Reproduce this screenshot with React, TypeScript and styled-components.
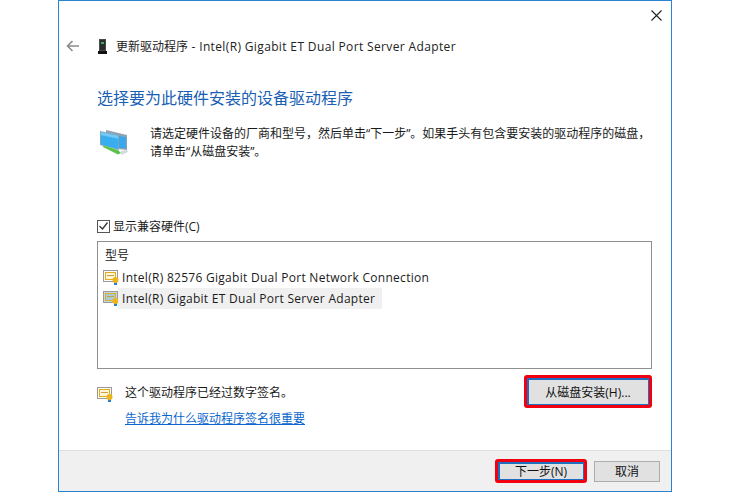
import styled, { createGlobalStyle } from "styled-components";

const GlobalStyle = createGlobalStyle`
  html, body {
    margin: 0;
    padding: 0;
    background: #ffffff;
  }
  body {
    font-family: "Open Sans", "Noto Sans CJK SC", sans-serif;
    font-size: 12px;
    color: #1a1a1a;
  }
`;

function BackArrow() {
  return (
    <svg width="14" height="12" viewBox="0 0 14 12" fill="none" stroke="#8c8c8c" strokeWidth="1.6">
      <path d="M13 6H1.500M6.500 1L1.500 6l5 5" />
    </svg>
  );
}

function DeviceIcon() {
  return (
    <svg width="9" height="15" viewBox="0 0 9 15">
      <rect x="1" y="0" width="7" height="12" fill="#4a4a4a" />
      <rect x="2" y="1" width="5" height="10" fill="#2b2b2b" />
      <rect x="3" y="3" width="3" height="2" fill="#3fae5a" />
      <rect x="0" y="12" width="9" height="3" fill="#111" />
    </svg>
  );
}

function NetworkIcon() {
  return (
    <svg width="28" height="26" viewBox="0 0 28 26">
      <path d="M6 0l21 5v15l-9-1V6L6 3z" fill="#8ea4b4" />
      <path d="M19 6l7 1.200v11.300l-7-.8z" fill="#38a8ea" />
      <path d="M0 1l19 4v15L0 15z" fill="#8ea4b4" />
      <path d="M.8 2l17.400 3.700v13.500L.8 14.600z" fill="#38aef0" />
      <path d="M.8 2l17.400 3.700v3L.8 5z" fill="#74caf4" />
      <path d="M2 16.500l3-.5 13 4 3 3-3 1.500z" fill="#5cc24d" />
      <path d="M21 21l6-1 1 2-7 3z" fill="#d2dade" />
    </svg>
  );
}

function CertIcon({ selected = false }: { selected?: boolean }) {
  return (
    <svg width="16" height="15" viewBox="0 0 16 15">
      <rect x="0.500" y="0.500" width="14" height="11" fill={selected ? "#c4d8e0" : "#fffdf4"} stroke="#9a9a9a" />
      <rect x="2.500" y="2.500" width="10" height="7" fill={selected ? "#a8cbd8" : "#fff6d8"} stroke="#e2ac20" />
      <rect x="4" y="5" width="7" height="1" fill="#c9a040" />
      <rect x="11" y="12" width="3" height="3" fill="#2f7fd0" />
      <circle cx="12.500" cy="10" r="3" fill="#efb41c" />
    </svg>
  );
}

function CloseIcon() {
  return (
    <svg width="11" height="11" viewBox="0 0 11 11" stroke="#222" strokeWidth="1.100">
      <path d="M0.500 0.500l10 10M10.500 0.500l-10 10" />
    </svg>
  );
}

function CheckMark() {
  return (
    <svg width="9" height="8" viewBox="0 0 9 8" fill="none" stroke="#333" strokeWidth="1.300">
      <path d="M0.500 4l3 3 5-6.500" />
    </svg>
  );
}

export default function App() {
  return (
    <>
      <GlobalStyle />
      <Window>
        <TitleBar>
          <CloseButton>
            <CloseIcon />
          </CloseButton>
        </TitleBar>
        <Header>
          <BackButton>
            <BackArrow />
          </BackButton>
          <DeviceIcon />
          <HeaderTitle>
            更新驱动程序<TitleLatin> - Intel(R) Gigabit ET Dual Port Server Adapter</TitleLatin>
          </HeaderTitle>
        </Header>
        <Content>
          <Heading>选择要为此硬件安装的设备驱动程序</Heading>
          <IntroRow>
            <IconSlot>
              <NetworkIcon />
            </IconSlot>
            <IntroText>
              请选定硬件设备的厂商和型号，然后单击“下一步”。如果手头有包含要安装的驱动程序的磁盘，
              <br />
              请单击“从磁盘安装”。
            </IntroText>
          </IntroRow>
          <CheckRow>
            <CheckBox>
              <CheckMark />
            </CheckBox>
            <span>显示兼容硬件(C)</span>
          </CheckRow>
          <ListBox>
            <ListHeader>型号</ListHeader>
            <ListRow>
              <CertIcon />
              <RowLabel>Intel(R) 82576 Gigabit Dual Port Network Connection</RowLabel>
            </ListRow>
            <ListRow>
              <CertIcon selected />
              <RowLabel $selected>Intel(R) Gigabit ET Dual Port Server Adapter</RowLabel>
            </ListRow>
          </ListBox>
          <SignRow>
            <SignInfo>
              <SignLine>
                <SignIcon>
                  <CertIcon />
                </SignIcon>
                <SignText>这个驱动程序已经过数字签名。</SignText>
              </SignLine>
              <SignLink href="#">告诉我为什么驱动程序签名很重要</SignLink>
            </SignInfo>
            <Button $width={128} $height={33} $highlight>
              从磁盘安装(H)...
            </Button>
          </SignRow>
        </Content>
        <Footer>
          <Button $width={92} $height={24} $highlight>
            下一步(N)
          </Button>
          <Button $width={66} $height={21}>
            取消
          </Button>
        </Footer>
      </Window>
    </>
  );
}

const Window = styled.div`
  box-sizing: border-box;
  display: flex;
  flex-direction: column;
  width: 614px;
  height: 492px;
  margin-left: 58px;
  border: 1px solid #2b82d0;
  background: #ffffff;
`;

const TitleBar = styled.div`
  display: flex;
  justify-content: flex-end;
  height: 29px;
`;

const CloseButton = styled.div`
  display: flex;
  align-items: center;
  justify-content: center;
  width: 30px;
  height: 29px;
`;

const Header = styled.div`
  display: flex;
  align-items: center;
  height: 32px;
  padding-left: 7px;
`;

const BackButton = styled.div`
  display: flex;
  width: 32px;
`;

const HeaderTitle = styled.div`
  margin-left: 9px;
  font-size: 12px;
  color: #222;
`;

const TitleLatin = styled.span`
  letter-spacing: 0.36px;
`;

const Content = styled.div`
  display: flex;
  flex-direction: column;
  flex: 1;
  padding: 0 19px 0 38px;
`;

const Heading = styled.div`
  margin-top: 25px;
  font-size: 16px;
  line-height: 22px;
  color: #1a5fb4;
`;

const IntroRow = styled.div`
  display: flex;
  align-items: flex-start;
  margin-top: 16px;
  margin-left: 3px;
  gap: 22px;
`;

const IconSlot = styled.div`
  display: flex;
  margin-top: 5px;
`;

const IntroText = styled.div`
  font-size: 12px;
  line-height: 18px;
  color: #1a1a1a;
  white-space: nowrap;
`;

const CheckRow = styled.div`
  display: flex;
  align-items: center;
  gap: 3px;
  margin-top: 56px;
  height: 18px;
`;

const CheckBox = styled.div`
  box-sizing: border-box;
  display: flex;
  align-items: center;
  justify-content: center;
  width: 13px;
  height: 13px;
  border: 1px solid #555;
`;

const ListBox = styled.div`
  box-sizing: border-box;
  display: flex;
  flex-direction: column;
  width: 555px;
  height: 128px;
  margin-top: 6px;
  padding-left: 5px;
  border: 1px solid #8f8f8f;
`;

const ListHeader = styled.div`
  box-sizing: border-box;
  height: 25px;
  padding: 4px 2px 0;
`;

const ListRow = styled.div`
  display: flex;
  align-items: center;
  height: 21px;
`;

const RowLabel = styled.div<{ $selected?: boolean }>`
  height: 21px;
  margin-left: -1px;
  padding: 0 7px 0 4px;
  line-height: 22px;
  letter-spacing: 0.28px;
  background: ${(p) => (p.$selected ? "#f0f0f0" : "transparent")};
`;

const SignRow = styled.div`
  display: flex;
  justify-content: space-between;
  align-items: flex-start;
  width: 555px;
  margin-top: 6px;
`;

const SignInfo = styled.div`
  display: flex;
  flex-direction: column;
  padding-top: 10px;
`;

const SignLine = styled.div`
  display: flex;
  align-items: flex-start;
  gap: 12px;
`;

const SignIcon = styled.div`
  display: flex;
  margin-top: 2px;
`;

const SignText = styled.span`
  line-height: 15px;
`;

const SignLink = styled.a`
  margin-top: 7px;
  margin-left: 28px;
  color: #0a66cc;
`;

const Footer = styled.div`
  box-sizing: border-box;
  display: flex;
  align-items: center;
  justify-content: flex-end;
  gap: 7px;
  height: 41px;
  padding-right: 11px;
  background: #f0f0f0;
  border-top: 1px solid #dfdfdf;
`;

const Button = styled.div<{ $width: number; $height: number; $highlight?: boolean }>`
  box-sizing: border-box;
  display: flex;
  align-items: center;
  justify-content: center;
  width: ${(p) => p.$width}px;
  height: ${(p) => p.$height}px;
  background: #e1e1e1;
  color: #111;
  border: ${(p) => (p.$highlight ? "3px solid #f00010" : "1px solid #adadad")};
  border-radius: ${(p) => (p.$highlight ? "3px" : "0")};
  box-shadow: ${(p) => (p.$highlight ? "inset 2px 2px 0 #1c6fc0, inset -1px -1px 0 #1c6fc0" : "none")};
`;
